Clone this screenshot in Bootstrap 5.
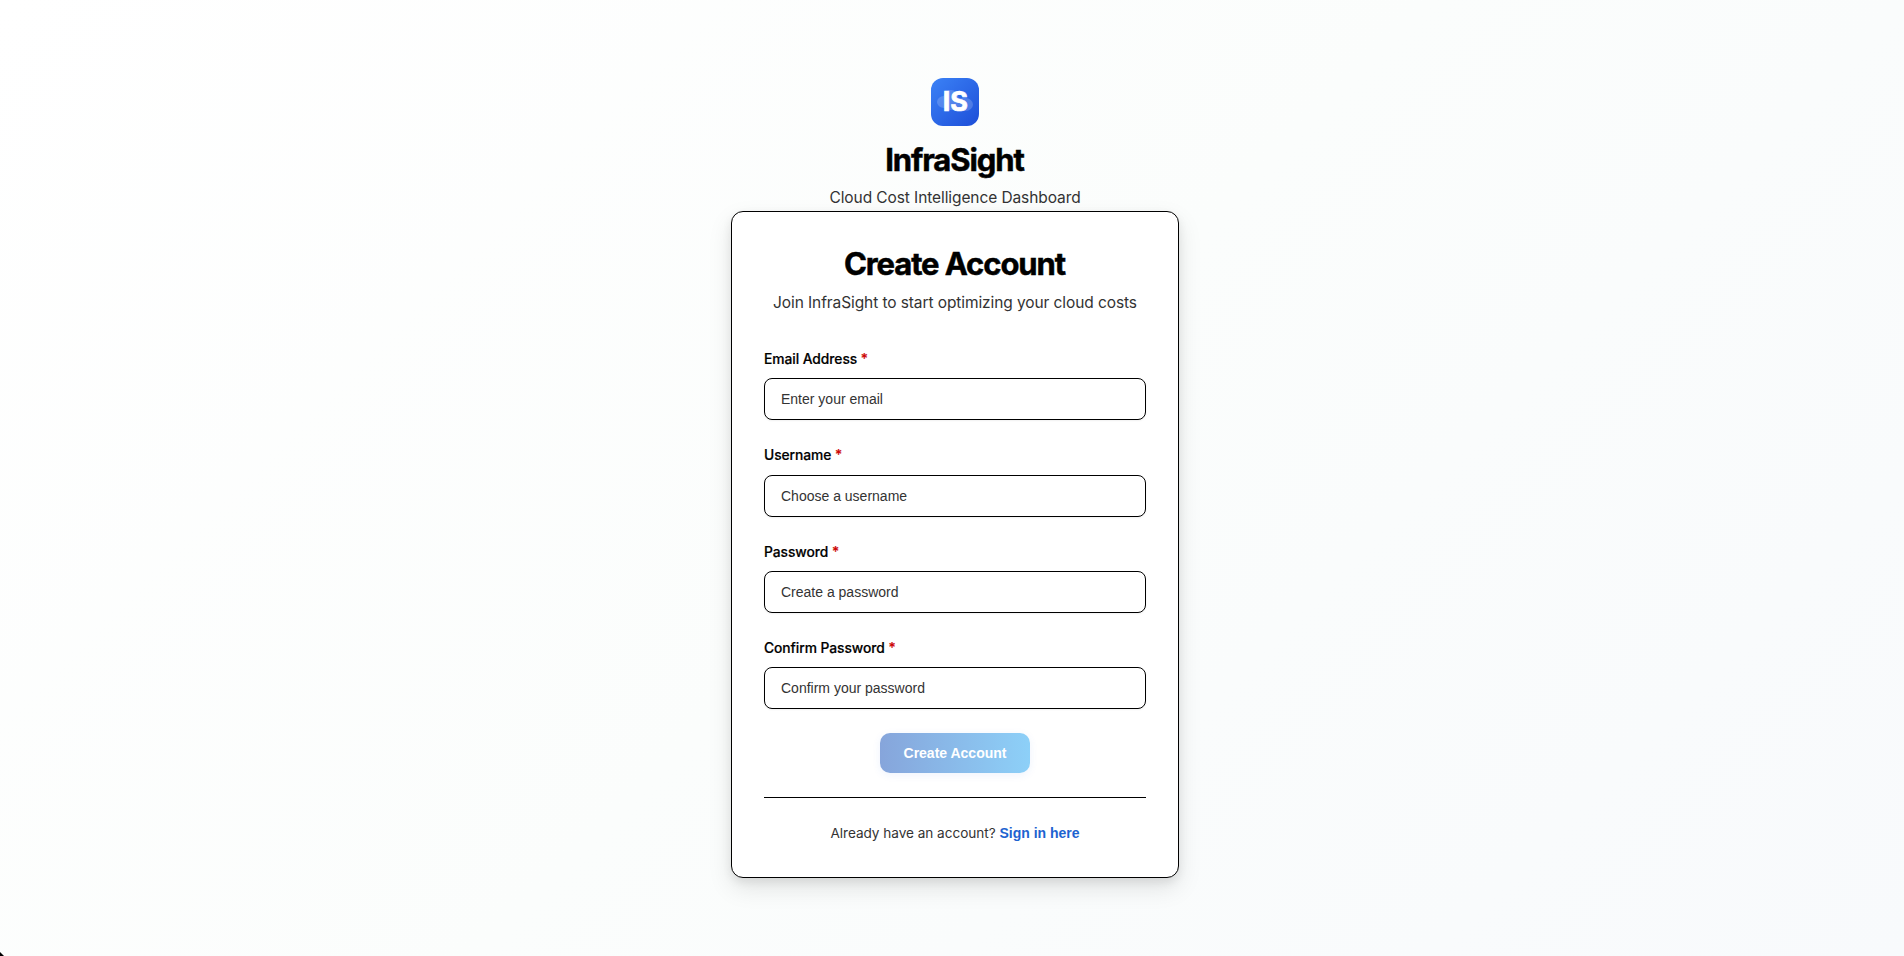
<!DOCTYPE html>
<html lang="en">
<head>
<meta charset="utf-8">
<meta name="viewport" content="width=device-width, initial-scale=1">
<title>InfraSight – Create Account</title>
<link href="https://cdn.jsdelivr.net/npm/bootstrap@5.3.0/dist/css/bootstrap.min.css" rel="stylesheet">
<style>
body{font-family:Inter,"Liberation Sans",sans-serif;color:#000;height:956px;overflow:hidden;background:linear-gradient(135deg,#fff 0%,#fbfdfc 50%,#f8fafc 100%)}
.page-wrap{padding:78px 0 0 6px}
.logo{width:48px;height:48px;display:block}
.title{font-size:31px;font-weight:700;line-height:40px;letter-spacing:-1.08px;text-indent:-1px;-webkit-text-stroke:.5px #000}
.brand-name{margin:14px 0 6px}
.lede{font-size:15.5px;line-height:24px;letter-spacing:-.09px;color:#333}
.signup{width:448px;height:667px;margin-top:1px;padding:32px;background:#fff;border:1px solid #000;border-radius:12px;box-shadow:0 10px 25px rgba(0,0,0,.1),0 4px 10px rgba(0,0,0,.08)}
.signup .lede{margin:7px 0 34px}
.form-label{font-size:13.8px;font-weight:500;line-height:20px;letter-spacing:-.05px;margin-bottom:9px;-webkit-text-stroke:.2px currentColor}
.form-label span{color:#c00}
.field{margin-bottom:25px}
.field:nth-of-type(2) .form-label{margin-bottom:10px}
.field:last-of-type{margin-bottom:24px}
.form-control{font-family:"Liberation Sans",Arial,sans-serif;font-size:14px;line-height:20px;height:42px;padding:10px 16px;border:1px solid #000;border-radius:8px;box-shadow:0 1px 2px rgba(0,0,0,.06)}
.form-control::placeholder{color:#333;opacity:1}
.btn-create{font-family:"Liberation Sans",Arial,sans-serif;font-size:14px;font-weight:700;line-height:20px;width:150px;height:40px;border:0;border-radius:10px;color:#fff;background:linear-gradient(90deg,#86a5db,#8dd0f8);box-shadow:0 2px 8px rgba(37,99,235,.08)}
.btn-create:hover{color:#fff}
.foot{font-size:13.6px;line-height:20px;letter-spacing:-.03px;color:#333;border-top:1px solid #000;margin-top:24px;padding-top:25px}
.foot a{font-family:"Liberation Sans",Arial,sans-serif;font-size:14px;font-weight:700;letter-spacing:0;color:#1d63d0}
.corner{position:absolute;left:0;bottom:0;width:4px;height:4px;background:#000;clip-path:polygon(0 0,100% 100%,0 100%)}
</style>
</head>
<body>
<main class="page-wrap d-flex flex-column align-items-center">
  <header class="d-flex flex-column align-items-center text-center">
    <svg class="logo" viewBox="0 0 48 48" role="img" aria-label="InfraSight logo">
      <defs><linearGradient id="lg" x1="0" y1="0" x2="1" y2="1"><stop offset="0" stop-color="#3b82f6"/><stop offset="1" stop-color="#1d4ed8"/></linearGradient></defs>
      <rect width="48" height="48" rx="12" fill="url(#lg)"/>
      <g fill="#fff" opacity=".18"><ellipse cx="13" cy="24" rx="7" ry="6"/><ellipse cx="20" cy="20" rx="7.500" ry="8"/><ellipse cx="34.500" cy="26.500" rx="7.500" ry="6.500"/><rect x="14" y="20" width="20" height="12"/></g>
      <text x="24.300" y="33" text-anchor="middle" font-family="Inter,sans-serif" font-weight="700" font-size="27" stroke="#fff" stroke-width=".7" fill="#fff">IS</text>
    </svg>
    <h1 class="title brand-name">InfraSight</h1>
    <p class="lede mb-0">Cloud Cost Intelligence Dashboard</p>
  </header>
  <section class="card signup">
    <h2 class="title text-center mb-0">Create Account</h2>
    <p class="lede text-center">Join InfraSight to start optimizing your cloud costs</p>
    <form>
      <div class="field"><label class="form-label d-block" for="email">Email Address <span>*</span></label><input id="email" class="form-control" type="email" placeholder="Enter your email"></div>
      <div class="field"><label class="form-label d-block" for="user">Username <span>*</span></label><input id="user" class="form-control" type="text" placeholder="Choose a username"></div>
      <div class="field"><label class="form-label d-block" for="pw">Password <span>*</span></label><input id="pw" class="form-control" type="password" placeholder="Create a password"></div>
      <div class="field"><label class="form-label d-block" for="pw2">Confirm Password <span>*</span></label><input id="pw2" class="form-control" type="password" placeholder="Confirm your password"></div>
      <button type="button" class="btn btn-create d-block mx-auto p-0">Create Account</button>
    </form>
    <div class="foot text-center">Already have an account? <a href="#" class="text-decoration-none">Sign in here</a></div>
  </section>
</main>
<div class="corner"></div>
</body>
</html>
